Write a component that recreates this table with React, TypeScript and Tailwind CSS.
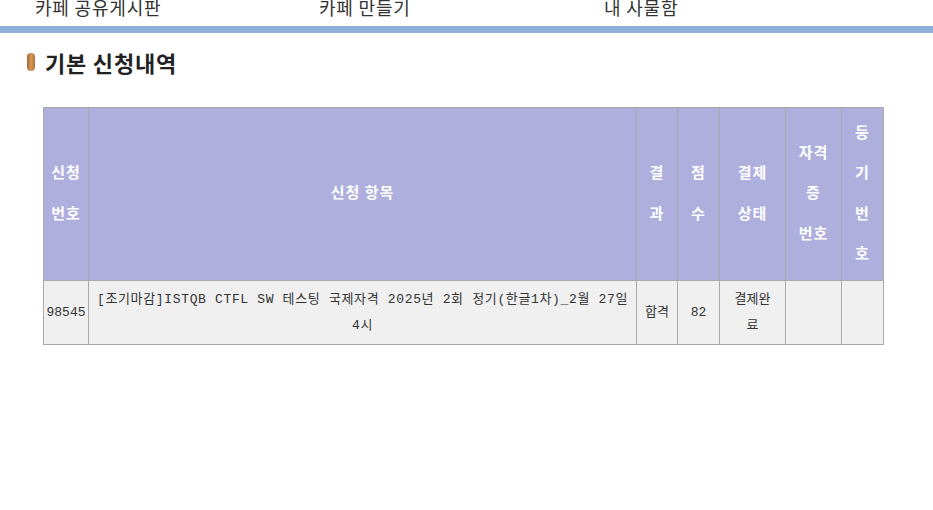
import React from "react";

const headFont = { fontFamily: '"Noto Sans CJK KR", "Noto Sans", sans-serif' };
const bodyFont = { fontFamily: '"Liberation Mono", "Noto Sans CJK KR", monospace' };

const headers: { lines: string[]; w: string }[] = [
  { lines: ["신청", "번호"], w: "w-[45px]" },
  { lines: ["신청 항목"], w: "w-[548px]" },
  { lines: ["결", "과"], w: "w-[41px]" },
  { lines: ["점", "수"], w: "w-[42px]" },
  { lines: ["결제", "상태"], w: "w-[66px]" },
  { lines: ["자격", "증", "번호"], w: "w-[56px]" },
  { lines: ["등", "기", "번", "호"], w: "w-[42px]" },
];

export default function App() {
  return (
    <div className="min-h-screen bg-white text-[#333]" style={headFont}>
      {/* Top menu (scrolled, partly cut off) */}
      <div className="h-[26px] overflow-hidden">
        <div className="flex -mt-[6px] text-[18px] leading-[26px] tracking-[0.8px] text-[#333]">
          <span className="ml-[35px] w-[284px]">카페 공유게시판</span>
          <span className="w-[285px]">카페 만들기</span>
          <span>내 사물함</span>
        </div>
      </div>
      <div className="h-[7px] bg-[#8fb0db]" />

      {/* Title */}
      <div className="flex items-center mt-[15px] ml-[27px]">
        <span className="w-[8px] h-[18px] rounded-full bg-gradient-to-r from-[#a8672c] via-[#d49a5a] to-[#b07238]" />
        <h2 className="ml-[10px] text-[22px] font-bold leading-[28px] tracking-[0.8px] text-[#222]">기본 신청내역</h2>
      </div>

      {/* Table */}
      <div className="ml-[43px] mt-[31px]">
        <table className="border-collapse table-fixed w-[840px]">
          <thead>
            <tr className="h-[173px] bg-[#aeafdd]">
              {headers.map((h, i) => (
                <th
                  key={i}
                  className={`${h.w} border border-[#aaaaaa] p-0 pb-[3px] align-middle text-center text-white font-bold text-[15px] leading-[40.5px] tracking-[1px] whitespace-nowrap`}
                >
                  {h.lines.map((l, j) => (
                    <div key={j}>{l}</div>
                  ))}
                </th>
              ))}
            </tr>
          </thead>
          <tbody>
            <tr className="h-[64px] bg-[#f0f0f0] text-[13px] leading-[26px] text-[#333]" style={bodyFont}>
              <td className="border border-[#aaaaaa] text-center p-0">98545</td>
              <td className="border border-[#aaaaaa] text-center px-1 tracking-[0.65px]">
                [조기마감]ISTQB CTFL SW 테스팅 국제자격 2025년 2회 정기(한글1차)_2월 27일
                <br />
                4시
              </td>
              <td className="border border-[#aaaaaa] text-center p-0">합격</td>
              <td className="border border-[#aaaaaa] text-center p-0">82</td>
              <td className="border border-[#aaaaaa] text-center p-0">
                결제완
                <br />료
              </td>
              <td className="border border-[#aaaaaa] p-0"></td>
              <td className="border border-[#aaaaaa] p-0"></td>
            </tr>
          </tbody>
        </table>
      </div>
    </div>
  );
}
